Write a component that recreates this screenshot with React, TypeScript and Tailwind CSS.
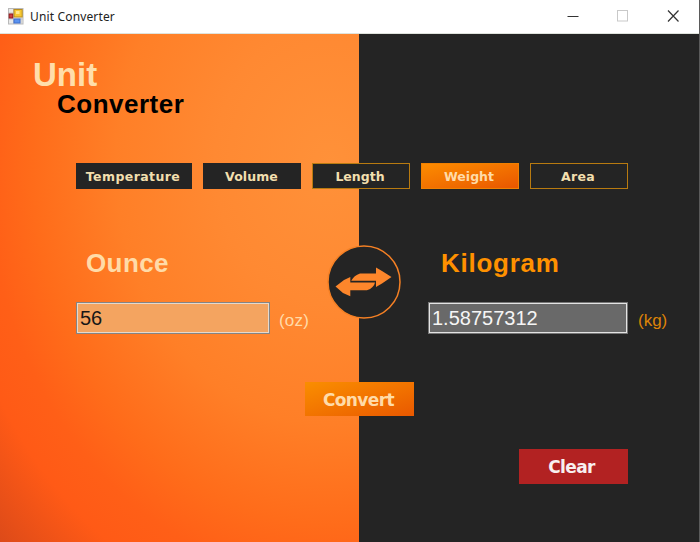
const tabs = [
  { label: "Temperature", box: "w-[116px] bg-[#242424] pr-[2px] tracking-[0.4px] text-[#f2dfae]" },
  { label: "Volume", box: "w-[98px] bg-[#242424] pr-px tracking-[0.1px] text-[#f2dfae]" },
  { label: "Length", box: "w-[98px] border border-[#b87a10] bg-[#242424] pr-[2px] text-[#f2dfae]" },
  {
    label: "Weight",
    box: "w-[98px] border border-[#f08000] bg-linear-to-br from-[#fc8c00] to-[#e85600] pr-[2px] text-[#ffdba8]",
  },
  { label: "Area", box: "w-[98px] border border-[#b87a10] bg-[#242424] pr-[2px] tracking-[0.3px] text-[#f2dfae]" },
];

function FormIcon() {
  return (
    <svg width="16" height="17" viewBox="0 0 16 17" className="block">
      <rect x="0.5" y="0.5" width="14.5" height="15.5" fill="#e9e9e9" stroke="#b9b9b9" />
      <path d="M5.5 1v15M1 5h4M1 11h14M13 10v6" stroke="#c4c4c4" fill="none" />
      <rect x="6" y="1.5" width="8.2" height="7.5" fill="#f6c832" stroke="#b88d20" />
      <rect x="8" y="3" width="3.5" height="3" fill="#ffe88a" />
      <rect x="1.2" y="6" width="3.5" height="4" fill="#cf4040" stroke="#93191d" />
      <rect x="6" y="11" width="6" height="4" fill="#5b93ef" stroke="#3f6fcf" />
    </svg>
  );
}

function SwapIcon() {
  return (
    <svg width="76" height="76" viewBox="0 0 76 76" className="block">
      <circle cx="38" cy="38" r="36" fill="#242424" stroke="#f58024" strokeWidth="1.5" />
      <path d="M25.2 36.8Q28 31.5 34 29.5H50V23.6L56 27L65.5 33L56 39.5L50 43V36.8Z" fill="#fd862b" />
      <path d="M9.5 42.5L18 36L24.3 33V38.4H49Q48.5 41 46.5 43Q44 45.7 41 46.3H24.3V52.2L17 49Z" fill="#fd862b" />
    </svg>
  );
}

export default function App() {
  return (
    <div className="flex h-[542px] w-[700px] flex-col overflow-hidden border-r border-[#5b5b5b] bg-white font-['Liberation_Sans',sans-serif]">
      <header className="flex h-[34px] shrink-0 items-center border-b border-[#dfe3dc] pl-2">
        <FormIcon />
        <span className="ml-[6px] grow whitespace-nowrap font-['Noto_Sans',sans-serif] text-[12px] tracking-[0.15px] text-[#222]">
          Unit Converter
        </span>
        <svg width="132" height="33" viewBox="0 0 132 33" fill="none" className="block">
          <path d="M0.5 16.5H11.5" stroke="#333" />
          <rect x="50.5" y="10.5" width="10" height="10.5" stroke="#c9c9c9" />
          <path d="M101 10.5L111.5 21.5M111.5 10.5L101 21.5" stroke="#333" strokeWidth="1.2" />
        </svg>
      </header>

      <main className="relative grow bg-[#242424]">
        <div className="h-[508px] w-[359px] bg-[radial-gradient(ellipse_330px_400px_at_330px_130px,#ff9139_0%,#ff8932_35%,#ff7f27_65%,#ff6c1a_90%,#ff5f17_104%,#ff5a16_116%,#dc4a19_138%)]" />

        {/* The form spans both halves of the window backdrop. */}
        <div className="absolute inset-0 flex flex-col">
          <h1 className="flex h-[129px] flex-col pt-[23px] font-bold">
            <span className="ml-[33px] text-[33px] leading-[36px] text-[#ffdeaa]">Unit</span>
            <span className="ml-[57px] text-[26px] leading-[23px] tracking-[0.5px] text-black">Converter</span>
          </h1>

          <nav className="flex h-[26px] gap-[11px] pl-[76px]">
            {tabs.map((t) => (
              <button
                key={t.label}
                className={`flex h-[26px] items-center justify-center pt-[2px] font-['DejaVu_Sans',sans-serif] text-[12.5px] font-bold ${t.box}`}
              >
                {t.label}
              </button>
            ))}
          </nav>

          <section className="flex h-[193px] pt-[55px]">
            <div className="w-[326px] shrink-0 pl-[76px]">
              <h2 className="h-[58px] pl-[10px] text-[26px] leading-[38px] font-bold tracking-[0.4px] text-[#ffdba8]">Ounce</h2>
              <div className="flex">
                <div className="flex h-8 w-[194px] items-center border-2 border-[#848484] bg-[#f4a460] pl-[2px] text-[20px] text-[#171717] outline-1 -outline-offset-2 outline-[#e6d9cc]">
                  56
                </div>
                <span className="ml-[9px] pt-[9px] text-[17px] leading-[20px] tracking-[0.2px] text-[#ffdba8]">(oz)</span>
              </div>
            </div>
            <button className="h-[76px] w-[76px] shrink-0">
              <SwapIcon />
            </button>
            <div className="pl-[26px]">
              <h2 className="h-[58px] pl-[13px] text-[26px] leading-[38px] font-bold tracking-[0.75px] text-[#ff9100]">Kilogram</h2>
              <div className="flex">
                <div className="flex h-8 w-[200px] items-center border-2 border-[#777] bg-[#696969] pl-[2px] text-[20px] text-[#f5f5f5] outline-1 -outline-offset-2 outline-[#e3e3e3]">
                  1.58757312
                </div>
                <span className="ml-[10px] pt-[9px] text-[17px] leading-[20px] text-[#dc8308]">(kg)</span>
              </div>
            </div>
          </section>

          <div className="flex h-[67px] pl-[305px]">
            <button className="h-[34px] w-[109px] bg-linear-to-br from-[#fa8e00] to-[#e95800] pt-[3px] pr-[2px] font-['DejaVu_Sans',sans-serif] text-[17px] font-bold tracking-[-0.6px] text-[#ffdba8]">
              Convert
            </button>
          </div>
          <div className="flex pl-[519px]">
            <button className="h-[35px] w-[109px] bg-[#b22222] pt-[2px] pr-[4px] font-['DejaVu_Sans',sans-serif] text-[17px] font-bold tracking-[-0.6px] text-[#f8f0f0]">
              Clear
            </button>
          </div>
        </div>
      </main>
    </div>
  );
}
